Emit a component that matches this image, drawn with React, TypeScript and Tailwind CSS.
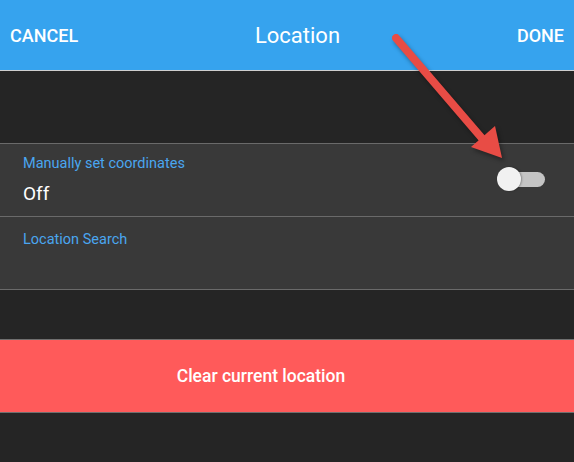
import React, { useState } from 'react';

const Arrow: React.FC = () => (
  <svg
    className="pointer-events-none absolute left-0 top-0"
    width="574"
    height="462"
    viewBox="0 0 574 462"
    style={{ filter: 'drop-shadow(2px 3px 2px rgba(0,0,0,0.35))' }}
  >
    <line x1="396" y1="38" x2="486" y2="143" stroke="#e84c45" strokeWidth="8" strokeLinecap="round" />
    <polygon points="502,158 471,147 495,126" fill="#e84c45" />
  </svg>
);

const App: React.FC = () => {
  const [manual, setManual] = useState(false);

  return (
    <div className="relative h-[462px] w-[574px] overflow-hidden bg-[#252525] font-['Roboto',sans-serif]">
      {/* Header */}
      <div className="flex h-[71px] items-center justify-between border-b border-[#cfcfcf] bg-[#36a3ee] px-[10px] text-white">
        <span className="text-[18px] font-medium">CANCEL</span>
        <span className="text-[22px]">Location</span>
        <span className="text-[18px] font-medium">DONE</span>
      </div>

      <div className="h-[72px]" />

      {/* Settings rows */}
      <div className="border-t border-[#6a6a6a] bg-[#393939]">
        <div className="flex h-[73px] justify-between border-b border-[#6a6a6a] pl-[23px] pr-[29px]">
          <div className="flex flex-col pt-[11px]">
            <span className="text-[14.5px] leading-[18px] text-[#4aa6f0]">Manually set coordinates</span>
            <span className="mt-[10px] text-[19px] leading-[22px] text-white">{manual ? 'On' : 'Off'}</span>
          </div>
          <button
            onClick={() => setManual(!manual)}
            className="relative mt-[23px] h-[24px] w-[48px]"
          >
            <span className="absolute left-[8px] right-[0px] top-[5px] h-[15px] rounded-full bg-[#c4c4c4]" />
            <span className="absolute left-0 top-0 h-[24px] w-[24px] rounded-full bg-[#f1f1f1] shadow-[1px_0_2px_rgba(0,0,0,0.3)]" />
          </button>
        </div>
        <div className="h-[73px] border-b border-[#6a6a6a] pl-[23px] pt-[10px]">
          <span className="text-[14.5px] leading-[18px] text-[#4aa6f0]">Location Search</span>
        </div>
      </div>

      <div className="h-[49px]" />

      {/* Clear button */}
      <div className="flex h-[74px] items-center justify-center border-y border-[#6f6f6f] bg-[#ff5a5a] pr-[52px]">
        <span className="text-[17.5px] font-medium text-white">Clear current location</span>
      </div>

      <Arrow />
    </div>
  );
};

export default App;
